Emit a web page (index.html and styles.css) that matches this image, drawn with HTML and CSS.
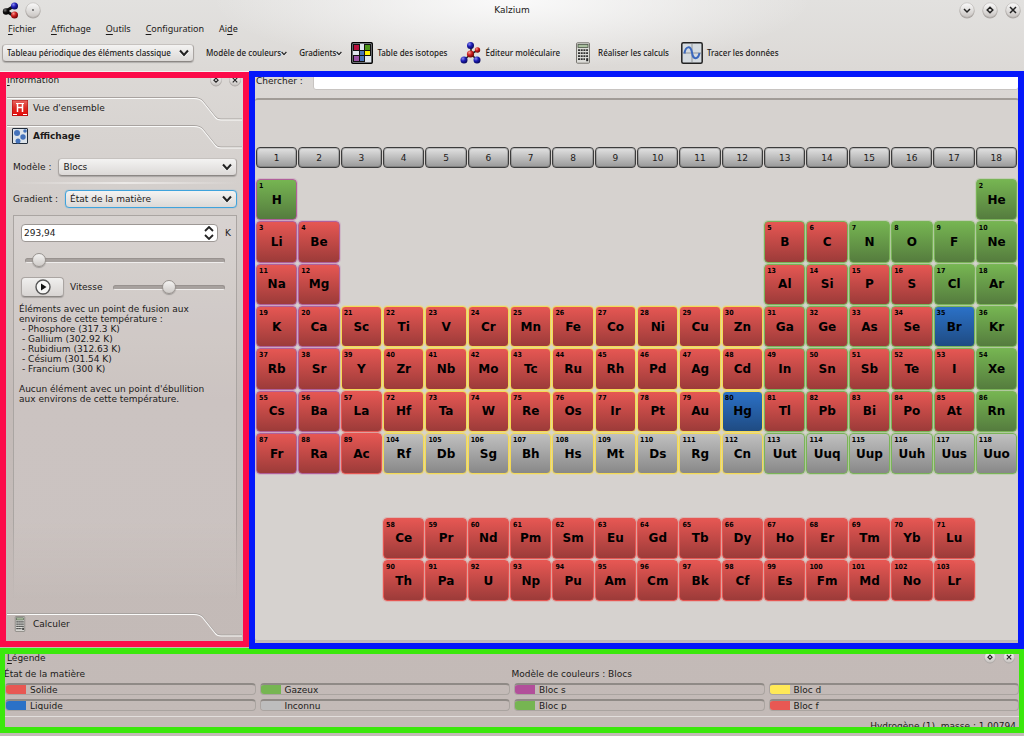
FILE: index.html
```
<!DOCTYPE html>
<html lang="fr">
<head>
<meta charset="utf-8">
<title>Kalzium</title>
<link rel="stylesheet" href="styles.css">
</head>
<body>
<svg class="defs" aria-hidden="true">
  <defs>
    <linearGradient id="knob" x1="0" y1="0" x2="0" y2="1"><stop offset="0" stop-color="#fafafa"/><stop offset="1" stop-color="#c9c5c2"/></linearGradient>
    <linearGradient id="redbox" x1="0" y1="0" x2="0" y2="1"><stop offset="0" stop-color="#e86a66"/><stop offset=".5" stop-color="#dc2a22"/><stop offset="1" stop-color="#e80808"/></linearGradient>
    <radialGradient id="ballb" cx=".35" cy=".3" r=".7"><stop offset="0" stop-color="#8a8af0"/><stop offset=".5" stop-color="#1d1db4"/><stop offset="1" stop-color="#08085e"/></radialGradient>
    <radialGradient id="ballr" cx=".35" cy=".3" r=".7"><stop offset="0" stop-color="#f59a90"/><stop offset=".5" stop-color="#cc1c1c"/><stop offset="1" stop-color="#6e0505"/></radialGradient>
    <radialGradient id="ballk" cx=".35" cy=".3" r=".7"><stop offset="0" stop-color="#777"/><stop offset=".5" stop-color="#111"/><stop offset="1" stop-color="#000"/></radialGradient>
    <symbol id="chev" viewBox="0 0 10 8"><path d="M1 1.5L5 6L9 1.5" fill="none" stroke="#fff" stroke-width="2" transform="translate(0 1)"/><path d="M1 1.5L5 6L9 1.5" fill="none" stroke="#222" stroke-width="2"/></symbol>
    <symbol id="w-min" viewBox="0 0 16 17"><circle cx="8" cy="9" r="7.5" fill="#aaa5a2"/><circle cx="8" cy="8" r="7.2" fill="url(#knob)" stroke="#b9b5b2" stroke-width=".6"/><path d="M5 7L8 10L11 7" fill="none" stroke="#222" stroke-width="1.5"/></symbol>
    <symbol id="w-max" viewBox="0 0 16 17"><circle cx="8" cy="9" r="7.5" fill="#aaa5a2"/><circle cx="8" cy="8" r="7.2" fill="url(#knob)" stroke="#b9b5b2" stroke-width=".6"/><path d="M8 5.200L10.800 8L8 10.800L5.200 8Z" fill="none" stroke="#222" stroke-width="1.500"/></symbol>
    <symbol id="w-close" viewBox="0 0 16 17"><circle cx="8" cy="9" r="7.5" fill="#aaa5a2"/><circle cx="8" cy="8" r="7.2" fill="url(#knob)" stroke="#b9b5b2" stroke-width=".6"/><path d="M5 5L11 11M11 5L5 11" fill="none" stroke="#222" stroke-width="1.500"/></symbol>
    <symbol id="w-dot" viewBox="0 0 16 17"><circle cx="8" cy="9" r="7.5" fill="#aaa5a2"/><circle cx="8" cy="8" r="7.2" fill="url(#knob)" stroke="#b9b5b2" stroke-width=".6"/><circle cx="8" cy="8" r=".9" fill="#555"/></symbol>
    <symbol id="calc" viewBox="0 0 16 22"><rect x="1.500" y=".8" width="13" height="20.400" rx="1" fill="#dcdcd8" stroke="#77756f" stroke-width="1"/><rect x="3" y="2.500" width="10" height="3" fill="#a9bf9e" stroke="#4a5545" stroke-width=".8"/><path d="M3 8.200H13M3 11.200H13M3 14.200H13M3 17.200H10" stroke="#333" stroke-width="1.700" stroke-dasharray="2 .7"/><rect x="11.200" y="16.200" width="2" height="3" fill="#222"/></symbol>
    <symbol id="tabline" viewBox="0 0 234 24" preserveAspectRatio="none"><path d="M0 .5H186Q192 .5 195 4L207 19Q209 22 213 22H234" fill="none" stroke="#a8a3a0" stroke-width="1"/><path d="M0 1.500H186Q192 1.500 195 5L207 20Q209 23 213 23H234" fill="none" stroke="#fbfbfa" stroke-width="1"/></symbol>
  </defs>
</svg>

<header class="titlebar">
  <div class="title-left">
    <svg width="17" height="17" viewBox="0 0 17 17"><path d="M4 9L12 4M4 9L12 14" stroke="#111" stroke-width="3"/><circle cx="4" cy="9.500" r="3.200" fill="url(#ballk)"/><circle cx="12.500" cy="4" r="3.500" fill="url(#ballb)"/><circle cx="12.500" cy="13" r="3.500" fill="url(#ballr)"/></svg>
    <button class="round" type="button" aria-label="Menu de la fenêtre"><svg width="16" height="17"><use href="#w-dot"/></svg></button>
  </div>
  <h1 class="title">Kalzium</h1>
  <div class="title-right">
    <button class="round" type="button" aria-label="Réduire"><svg width="16" height="17"><use href="#w-min"/></svg></button>
    <button class="round" type="button" aria-label="Agrandir"><svg width="16" height="17"><use href="#w-max"/></svg></button>
    <button class="round" type="button" aria-label="Fermer"><svg width="16" height="17"><use href="#w-close"/></svg></button>
  </div>
</header>

<nav class="menubar">
  <button type="button"><u>F</u>ichier</button>
  <button type="button"><u>A</u>ffichage</button>
  <button type="button"><u>O</u>utils</button>
  <button type="button"><u>C</u>onfiguration</button>
  <button type="button">Ai<u>d</u>e</button>
</nav>

<div class="toolbar">
  <div class="combo table-combo">
    <select aria-label="Tableau"><option>Tableau périodique des éléments classique</option></select>
    <svg class="arrow" width="10" height="8"><use href="#chev"/></svg>
  </div>
  <button class="tool drop" type="button">Modèle de couleurs<svg width="6" height="5"><use href="#chev"/></svg></button>
  <button class="tool drop" type="button">Gradients<svg width="6" height="5"><use href="#chev"/></svg></button>
  <button class="tool" type="button">
    <svg width="22" height="22" viewBox="0 0 22 22"><rect x=".8" y=".8" width="20.400" height="20.400" rx="1" fill="#dfe5ec" stroke="#000" stroke-width="1.500"/><g stroke="#111" stroke-width="1"><rect x="2.500" y="2.500" width="6" height="6" fill="#b9103c"/><rect x="13.500" y="2.500" width="6" height="6" fill="#4c9418"/><rect x="8.500" y="8.500" width="5" height="5" fill="#4a74b8"/><rect x="13.500" y="8.500" width="6" height="5" fill="#fff200"/><rect x="2.500" y="13.500" width="6" height="6" fill="#9a52a5"/><rect x="8.500" y="13.500" width="5" height="6" fill="#4a74b8"/></g></svg>
    Table des isotopes</button>
  <button class="tool" type="button">
    <svg width="22" height="22" viewBox="0 0 22 22"><path d="M11 4L11 12L18 8M11 12L4 18M11 12L17 18" fill="none" stroke="#222" stroke-width="1.600"/><circle cx="10.500" cy="3.500" r="3.500" fill="url(#ballb)"/><circle cx="17.500" cy="8" r="2.700" fill="url(#ballr)"/><circle cx="10.500" cy="12" r="3.600" fill="url(#ballr)"/><circle cx="4" cy="18" r="3.500" fill="url(#ballb)"/><circle cx="17" cy="18" r="3.500" fill="url(#ballb)"/></svg>
    Éditeur moléculaire</button>
  <button class="tool" type="button">
    <svg width="22" height="22"><use href="#calc"/></svg>
    Réaliser les calculs</button>
  <button class="tool" type="button">
    <svg width="22" height="22" viewBox="0 0 22 22"><rect x=".8" y=".8" width="20.400" height="20.400" rx="1.500" fill="#d5dbe0" stroke="#222" stroke-width="1.500"/><path d="M11 2V20M2 11H20" stroke="#b3b8bc" stroke-width="2"/><path d="M3.500 11.500C4.500 4 9.500 3 11 10.500C12 18 17 18 18.500 11" fill="none" stroke="#3b68bd" stroke-width="2"/></svg>
    Tracer les données</button>
</div>

<main class="work">
  <aside class="dock frame frame-red">
    <div class="dock-head"><span><u>I</u>nformation</span>
      <span class="dock-btns">
        <button class="round" type="button" aria-label="Détacher"><svg width="12" height="13"><use href="#w-max"/></svg></button>
        <button class="round" type="button" aria-label="Fermer le panneau"><svg width="12" height="13"><use href="#w-close"/></svg></button>
      </span>
    </div>
    <button class="tab" type="button"><svg class="tab-edge" aria-hidden="true"><use href="#tabline"/></svg>
      <svg width="16" height="16" viewBox="0 0 16 16"><rect width="16" height="16" fill="url(#redbox)" stroke="#a50f0f"/><path d="M5.500 3.500V12M10.500 3.500V12M5.500 7.500H10.500" fill="none" stroke="#fff" stroke-width="1.500"/><path d="M4 3.500H12M1 14.500H5M11 14.500H15" stroke="#fff" stroke-width="1"/></svg>
      <span>Vue d'ensemble</span></button>
    <button class="tab current" type="button"><svg class="tab-edge" aria-hidden="true"><use href="#tabline"/></svg>
      <svg width="16" height="16" viewBox="0 0 16 16"><rect x=".5" y=".5" width="15" height="15" rx=".5" fill="#dce3ea" stroke="#222d3a"/><g fill="#4472bb"><circle cx="5" cy="5" r="3"/><circle cx="11" cy="9" r="2.700"/><circle cx="6" cy="13" r="2.500"/><circle cx="13" cy="3" r="1.800"/></g></svg>
      <span>Affichage</span></button>
    <div class="page">
      <div class="field"><label for="model">Modèle :</label>
        <div class="combo"><select id="model"><option>Blocs</option></select><svg class="arrow" width="10" height="8"><use href="#chev"/></svg></div></div>
      <hr class="sep">
      <div class="field"><label for="grad">Gradient :</label>
        <div class="combo focus"><select id="grad"><option>État de la matière</option></select><svg class="arrow" width="10" height="8"><use href="#chev"/></svg></div></div>
      <div class="group">
        <div class="temp">
          <div class="spin"><input id="temp" type="text" inputmode="decimal" value="293,94">
            <div class="spin-btns">
              <button type="button" aria-label="Augmenter"><svg width="10" height="6" viewBox="0 0 10 6"><path d="M1 5L5 1L9 5" fill="none" stroke="#222" stroke-width="1.800"/></svg></button>
              <button type="button" aria-label="Diminuer"><svg width="10" height="6" viewBox="0 0 10 6"><path d="M1 1L5 5L9 1" fill="none" stroke="#222" stroke-width="1.800"/></svg></button>
            </div></div>
          <label for="temp">K</label>
        </div>
        <input class="slider" type="range" min="0" max="100" value="3" aria-label="Température">
        <div class="speed">
          <button class="play" type="button" aria-label="Lecture"><svg width="16" height="16" viewBox="0 0 16 16"><circle cx="8" cy="8" r="7" fill="#f7f7f6" stroke="#555" stroke-width="1.400"/><path d="M6 4.500L11.500 8L6 11.500Z" fill="#111"/></svg></button>
          <label for="speed">Vitesse</label>
          <input class="slider" id="speed" type="range" min="0" max="100" value="50">
        </div>
        <div class="info">
          <p>Éléments avec un point de fusion aux environs de cette température :</p>
          <ul><li>- Phosphore (317.3 K)</li><li>- Gallium (302.92 K)</li><li>- Rubidium (312.63 K)</li><li>- Césium (301.54 K)</li><li>- Francium (300 K)</li></ul>
          <p>Aucun élément avec un point d'ébullition aux environs de cette température.</p>
        </div>
      </div>
    </div>
    <button class="tab" type="button"><svg class="tab-edge" aria-hidden="true"><use href="#tabline"/></svg>
      <svg width="16" height="16"><use href="#calc"/></svg>
      <span>Calculer</span></button>
  </aside>

  <section class="center frame frame-blue">
    <div class="search"><label for="search">Chercher :</label><input id="search" type="text"></div>
    <div class="board">
      <div class="groups" id="groups"></div>
      <div class="elements" id="elements"></div>
    </div>
  </section>
</main>

<footer class="legend frame frame-green">
  <div class="legend-head"><span><u>L</u>égende</span>
    <span class="dock-btns">
      <button class="round" type="button" aria-label="Détacher la légende"><svg width="12" height="13"><use href="#w-max"/></svg></button>
      <button class="round" type="button" aria-label="Fermer la légende"><svg width="12" height="13"><use href="#w-close"/></svg></button>
    </span>
  </div>
  <div class="legend-titles"><span>État de la matière</span><span>Modèle de couleurs : Blocs</span></div>
  <div class="keys">
    <div class="key k-solid">Solide</div><div class="key k-gas">Gazeux</div><div class="key k-s">Bloc s</div><div class="key k-d">Bloc d</div>
    <div class="key k-liquid">Liquide</div><div class="key k-unknown">Inconnu</div><div class="key k-p">Bloc p</div><div class="key k-f">Bloc f</div>
  </div>
  <div class="status">Hydrogène (1), masse : 1.00794</div>
</footer>
<script src="table.js"></script>
</body>
</html>
```
FILE: styles.css
```
* { box-sizing: border-box; }
body {
  margin: 0;
  min-height: 100vh;
  padding-bottom: 3px;
  display: flex;
  flex-direction: column;
  font: 9px/12px "DejaVu Sans", sans-serif;
  color: #1c1a19;
  background:
    radial-gradient(ellipse 300px 70px at 50% 0, #fafafa, rgba(250, 250, 250, 0)),
    linear-gradient(#e2e1df, #dcd9d6 70px, #d3cecb 200px, #c4bbb8 400px, #c3bab7);
}
.defs { position: absolute; width: 0; height: 0; }
button, input, select { font: inherit; color: inherit; margin: 0; padding: 0; border: 0; background: none; }
svg { display: block; flex: none; }
u { text-underline-offset: 2px; }

.titlebar { display: grid; grid-template-columns: 1fr auto 1fr; align-items: center; height: 20px; }
.title { margin: 0; font: 9px/12px "DejaVu Sans", sans-serif; }
.title-left, .title-right { display: flex; align-items: center; }
.title-left { gap: 6px; padding-left: 2px; }
.title-right { gap: 7px; justify-content: flex-end; padding-right: 3px; }

.menubar { display: flex; gap: 15px; height: 18px; align-items: center; padding-left: 8px; font-family: "Noto Sans", sans-serif; font-size: 9px; }

.toolbar { display: flex; align-items: center; gap: 12px; height: 33px; padding: 0 0 3px 2px; font: 500 8px/12px "Noto Sans", sans-serif; }
.tool { display: flex; align-items: center; gap: 4px; white-space: nowrap; }
.drop { gap: 0; }
.drop + .drop { margin-right: -3px; }

.combo { position: relative; display: flex; flex: 1; }
.combo select {
  appearance: none;
  width: 100%;
  height: 18px;
  padding: 0 20px 0 4px;
  border: 1px solid #aaa5a2;
  border-top-color: #c6c2bf;
  border-bottom-color: #8b8784;
  border-radius: 4px;
  background: linear-gradient(#f4f3f2, #dcd9d7);
  box-shadow: 0 1px 1px rgba(0, 0, 0, .2);
}
.combo.focus select { border: 1px solid #3fa3dc; box-shadow: 0 0 1px #3fa3dc; }
.arrow { position: absolute; right: 5px; top: 5px; pointer-events: none; }
.table-combo { flex: 0 0 192px; }

.work { flex: 1; display: grid; grid-template-columns: 249px 1fr; }
.frame { position: relative; }
.frame::after { content: ""; position: absolute; inset: 0; border: 6px solid; pointer-events: none; }
.frame-red::after { border-color: #fc0b4a; inset: 0 0 1px 0; }
.frame-blue::after { border-color: #0417fb; inset: 0 0 -1px 0; z-index: 1; }
.frame-green::after { border-color: #3be80c; border-width: 6px 5px 6px 5px; }

.dock { display: flex; flex-direction: column; padding: 2px 7px 7px 7px; border-top: 1px solid #f3f2f1; }
.dock-head, .legend-head { display: flex; justify-content: space-between; align-items: center; }
.dock-head { height: 12px; margin-bottom: 11px; }
.dock-btns { display: flex; gap: 7px; padding-right: 1px; }
.tab { position: relative; display: flex; align-items: center; gap: 5px; height: 28px; padding: 0 0 6px 5px; flex: none; }
.tab-edge { position: absolute; left: 0; top: 0; width: 100%; height: 24px; }
.current { font-weight: bold; }
.page { flex: 1; display: flex; flex-direction: column; padding: 5px 5px 14px 6px; }
.field { display: flex; align-items: center; gap: 7px; height: 18px; }
.sep { width: 100%; margin: 6px 0; border: 0; height: 2px; background: linear-gradient(90deg, transparent, #ece9e7, transparent); }
.group {
  flex: 1;
  margin-top: 7px;
  padding: 8px 5px 0 7px;
  border: 1px solid;
  border-bottom: 0;
  border-image: linear-gradient(#aaa5a2, #aaa5a2 80%, transparent) 1;
  background: linear-gradient(rgba(255, 255, 255, .12), rgba(255, 255, 255, .12) 80%, transparent);
}
.temp { display: flex; align-items: center; gap: 7px; }
.spin { flex: 1; display: flex; height: 18px; border: 1px solid #9d9895; border-radius: 4px; background: #fff; }
.spin input { flex: 1; min-width: 0; padding-left: 2px; outline: 0; }
.spin-btns { display: flex; flex-direction: column; justify-content: center; gap: 2px; padding-right: 3px; }
.spin-btns button { height: 6px; }
.slider { appearance: none; display: block; height: 16px; background: none; }
.group > .slider { width: calc(100% - 10px); margin: 10px 0 9px 4px; }
.slider::-webkit-slider-runnable-track { height: 5px; border-radius: 3px; background: #a7a19e; border: 1px solid #98928f; border-bottom-color: #efedec; }
.slider::-webkit-slider-thumb { appearance: none; width: 14px; height: 14px; margin-top: -6px; border-radius: 50%; background: linear-gradient(#f3f2f1, #cfcbc8); border: 1px solid #98938f; box-shadow: 0 1px 1px rgba(0, 0, 0, .25); }
.speed { display: flex; align-items: center; gap: 6px; padding-right: 6px; }
.speed .slider { flex: 1; min-width: 0; margin-left: 5px; }
.play { display: flex; align-items: center; justify-content: center; width: 43px; height: 20px; border: 1px solid #aaa5a2; border-bottom-color: #8b8784; border-radius: 4px; background: linear-gradient(#f0efee, #d8d4d2); box-shadow: 0 1px 1px rgba(0, 0, 0, .2); }
.info { line-height: 10px; padding: 7px 16px 0 0; margin-left: -2px; }
.info p { margin: 0; }
.info ul { list-style: none; margin: 0 0 10px; padding: 0 0 0 3px; }

.center { display: flex; flex-direction: column; padding: 1px 5px 7px 6px; }
.search { display: flex; align-items: center; gap: 10px; padding-left: 1px; }
.search input { flex: 1; height: 18px; border: 1px solid #c8c4c1; border-radius: 3px; background: #fff; }
.board { flex: 1; margin-top: 8px; padding: 47px 2px 0 1px; border: 1px solid #bdb8b5; border-top: 2px solid #a19c97; border-left: 0; border-right: 0; border-radius: 3px; background: #d6d2cf; }
.groups, .elements { display: grid; grid-template-columns: repeat(18, 1fr); gap: 1px; }
.groups { margin-bottom: 11px; }
.group-no { height: 21px; border: 1px solid #3c3c3c; border-radius: 4px; background: linear-gradient(#e2e2e2, #999); box-shadow: inset 0 0 0 1px rgba(60, 60, 60, .25); }
.element { position: relative; aspect-ratio: 1; border: 1px solid; border-radius: 4px; color: #000; font: bold 12px/16px "DejaVu Sans", sans-serif; text-align: center; }
.number { position: absolute; left: 2px; top: 2px; font: bold 7px/8px "DejaVu Sans Condensed", "DejaVu Sans", sans-serif; }
.spacer { aspect-ratio: 1; grid-row: 8; grid-column: 1; }
.solid { background: linear-gradient(#e65753, #9c3b39); }
.gas { background: linear-gradient(#76b552, #557c3e); }
.liquid { background: linear-gradient(#2b71c7, #1f4b82); }
.unknown { background: linear-gradient(#c0c0c0, #888); }
.block-s { border-color: #b0609a; box-shadow: 0 0 0 1px rgba(190, 110, 170, .25); }
.block-p { border-color: #7ab458; box-shadow: 0 0 0 1px rgba(130, 190, 95, .25); }
.block-d { border-color: #f3d955; box-shadow: 0 0 0 1px rgba(250, 225, 90, .3); }
.block-f { border-color: #e65753; box-shadow: 0 0 0 1px rgba(232, 100, 95, .25); }

.legend { padding: 3px 5px 0 5px; height: 85px; overflow: hidden; }
.legend-head { height: 13px; padding: 0 3px 0 2px; }
.legend-titles { display: grid; grid-template-columns: 1fr 1fr; margin: 4px 0 3px -1px; }
.keys { display: grid; grid-template-columns: repeat(4, 1fr); gap: 4px; }
.key { display: flex; align-items: center; gap: 4px; height: 12px; border: 1px solid #aaa4a0; border-top: 2px solid #8f8a86; border-radius: 4px; overflow: hidden; }
.key::before { content: ""; width: 20px; height: 10px; background: var(--c); }
.k-solid, .k-f { --c: #e85853; }
.k-liquid { --c: #2b71c7; }
.k-gas, .k-p { --c: #76b552; }
.k-unknown { --c: #bdbdbd; }
.k-s { --c: #b24f9a; }
.k-d { --c: #ffe957; }
.status { margin-top: 5px; padding: 3px 3px 0; border-top: 1px solid #e2dedc; text-align: right; }
```
FILE: table.js
```
const rows = [
  [[1, 1, "H"], [18, 2, "He"]],
  [[1, 3, "Li Be"], [13, 5, "B C N O F Ne"]],
  [[1, 11, "Na Mg"], [13, 13, "Al Si P S Cl Ar"]],
  [[1, 19, "K Ca Sc Ti V Cr Mn Fe Co Ni Cu Zn Ga Ge As Se Br Kr"]],
  [[1, 37, "Rb Sr Y Zr Nb Mo Tc Ru Rh Pd Ag Cd In Sn Sb Te I Xe"]],
  [[1, 55, "Cs Ba La"], [4, 72, "Hf Ta W Re Os Ir Pt Au Hg Tl Pb Bi Po At Rn"]],
  [[1, 87, "Fr Ra Ac"], [4, 104, "Rf Db Sg Bh Hs Mt Ds Rg Cn Uut Uuq Uup Uuh Uus Uuo"]],
  [],
  [[4, 58, "Ce Pr Nd Pm Sm Eu Gd Tb Dy Ho Er Tm Yb Lu"]],
  [[4, 90, "Th Pa U Np Pu Am Cm Bk Cf Es Fm Md No Lr"]]
];
const gases = [1, 2, 7, 8, 9, 10, 17, 18, 36, 54, 86];
const liquids = [35, 80];

function stateOf(z) {
  if (gases.includes(z)) return "gas";
  if (liquids.includes(z)) return "liquid";
  return z > 103 ? "unknown" : "solid";
}
function blockOf(z, col, row) {
  if (row > 7 || z === 57 || z === 89) return "f";
  if (col < 3) return "s";
  return col < 13 ? "d" : "p";
}

const groups = document.getElementById("groups");
for (let i = 1; i <= 18; i++) {
  const b = document.createElement("button");
  b.type = "button";
  b.className = "group-no";
  b.textContent = i;
  groups.append(b);
}

const table = document.getElementById("elements");
rows.forEach((runs, r) => {
  for (const [start, first, names] of runs) {
    names.split(" ").forEach((name, i) => {
      const z = first + i, col = start + i;
      const b = document.createElement("button");
      b.type = "button";
      b.className = `element ${stateOf(z)} block-${blockOf(z, col, r + 1)}`;
      b.style.gridArea = `${r + 1} / ${col}`;
      const n = document.createElement("span");
      n.className = "number";
      n.textContent = z;
      b.append(n, name);
      table.append(b);
    });
  }
});
const spacer = document.createElement("div");
spacer.className = "spacer";
table.append(spacer);
```
